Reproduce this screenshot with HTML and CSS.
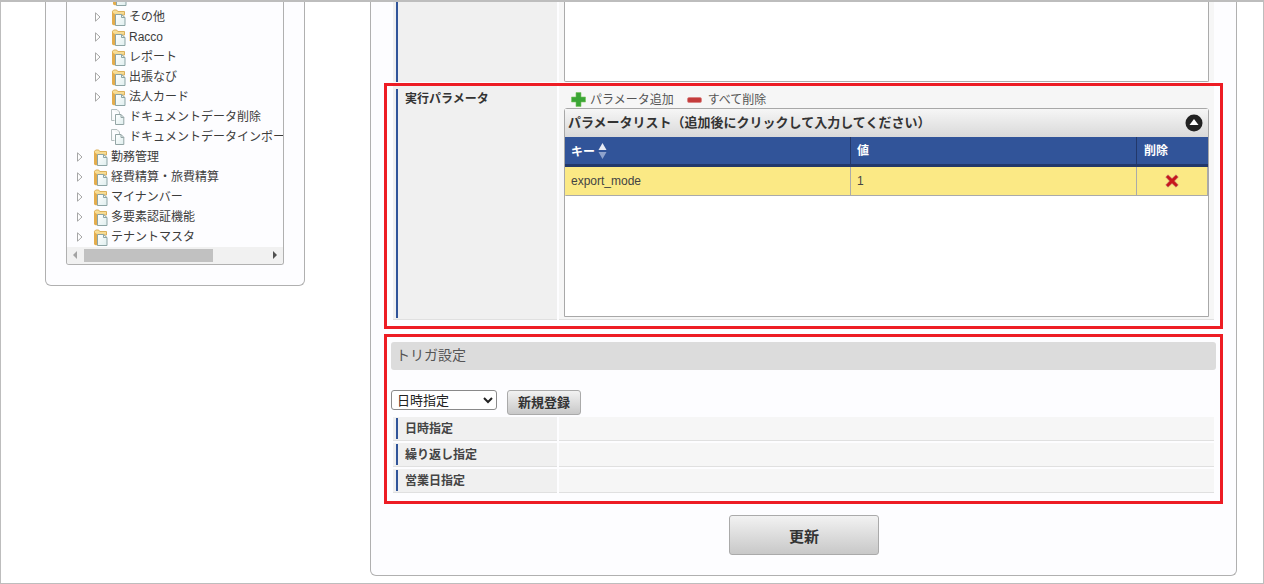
FILE: index.html
```html
<!DOCTYPE html>
<html lang="ja">
<head>
<meta charset="utf-8">
<title>ジョブ設定</title>
<link rel="stylesheet" href="styles.css">
</head>
<body>
<svg class="defs" width="0" height="0" aria-hidden="true">
  <defs>
    <linearGradient id="fold" x1="0" y1="0" x2="0" y2="1"><stop offset="0" stop-color="#fae3a0"/><stop offset="1" stop-color="#e8bc62"/></linearGradient>
    <linearGradient id="page" x1="0" y1="0" x2="1" y2="1"><stop offset="0" stop-color="#ffffff"/><stop offset="1" stop-color="#dfeeee"/></linearGradient>
    <symbol id="doc" viewBox="0 0 15 18">
      <path d="M1.500 1.500h5.500l2.500 2.500v2.500M1.500 1.500v11h3" fill="#f6f8f8" stroke="#b4bebe"/>
      <path d="M5.500 6.500h5.500l2.800 2.800v7.200h-8.300z" fill="url(#page)" stroke="#93a5a5"/>
      <path d="M11 6.500v3h2.800" fill="none" stroke="#93a5a5"/>
    </symbol>
    <symbol id="folder" viewBox="0 0 15 17">
      <path d="M1.500 15V2.200L2.700 1h3l1 1.500h6.800V6H5v9.500H2z" fill="url(#fold)" stroke="#dcb05a"/>
      <path d="M1 3v12l1.500 1.200H5V6z" fill="#e3ad4e"/>
      <path d="M4.500 5.500h6l3.500 3v8h-9.500z" fill="url(#page)" stroke="#8da5a5"/>
      <path d="M10.500 5.500v3H14" fill="none" stroke="#8da5a5"/>
    </symbol>
    <symbol id="arrow" viewBox="0 0 6 10">
      <path d="M0.500 0.800l4.500 4.200l-4.500 4.200z" fill="#fff" stroke="#a6a6a6"/>
    </symbol>
  </defs>
</svg>
<div class="frame">
  <aside class="side">
    <div class="side-card">
      <div class="tree">
        <ul class="tree-list">
          <li class="node lv2 clip"><svg class="ic"><use href="#folder"/></svg></li>
          <li class="node lv2"><svg class="ar"><use href="#arrow"/></svg><svg class="ic"><use href="#folder"/></svg><span>その他</span></li>
          <li class="node lv2"><svg class="ar"><use href="#arrow"/></svg><svg class="ic"><use href="#folder"/></svg><span>Racco</span></li>
          <li class="node lv2"><svg class="ar"><use href="#arrow"/></svg><svg class="ic"><use href="#folder"/></svg><span>レポート</span></li>
          <li class="node lv2"><svg class="ar"><use href="#arrow"/></svg><svg class="ic"><use href="#folder"/></svg><span>出張なび</span></li>
          <li class="node lv2"><svg class="ar"><use href="#arrow"/></svg><svg class="ic"><use href="#folder"/></svg><span>法人カード</span></li>
          <li class="node lv2 leaf"><svg class="ic tall"><use href="#doc"/></svg><span>ドキュメントデータ削除</span></li>
          <li class="node lv2 leaf"><svg class="ic tall"><use href="#doc"/></svg><span>ドキュメントデータインポート</span></li>
          <li class="node"><svg class="ar"><use href="#arrow"/></svg><svg class="ic"><use href="#folder"/></svg><span>勤務管理</span></li>
          <li class="node"><svg class="ar"><use href="#arrow"/></svg><svg class="ic"><use href="#folder"/></svg><span>経費精算・旅費精算</span></li>
          <li class="node"><svg class="ar"><use href="#arrow"/></svg><svg class="ic"><use href="#folder"/></svg><span>マイナンバー</span></li>
          <li class="node"><svg class="ar"><use href="#arrow"/></svg><svg class="ic"><use href="#folder"/></svg><span>多要素認証機能</span></li>
          <li class="node"><svg class="ar"><use href="#arrow"/></svg><svg class="ic"><use href="#folder"/></svg><span>テナントマスタ</span></li>
        </ul>
        <div class="hscroll">
          <span class="sb-left"></span>
          <div class="sb-track"><div class="sb-thumb"></div></div>
          <span class="sb-right"></span>
        </div>
      </div>
    </div>
  </aside>

  <main class="main-card">
    <div class="form-row first">
      <div class="label"></div>
      <div class="value"><div class="textarea"></div></div>
    </div>
    <div class="form-row params">
      <div class="label"><span class="label-bar">実行パラメータ</span></div>
      <div class="value">
        <div class="actions">
          <svg class="act-ic" viewBox="0 0 15 15"><path d="M5 .5h5v4.500h4.500v5h-4.500v4.500h-5v-4.500h-4.500v-5h4.500z" fill="#3aa535" stroke="#7ac25e" stroke-width=".6"/></svg>
          <span class="act-text">パラメータ追加</span>
          <svg class="act-ic minus" viewBox="0 0 15 6"><rect x=".5" y=".5" width="14" height="5" rx="1.500" fill="#c43c3c" stroke="#d87878" stroke-width=".6"/></svg>
          <span class="act-text">すべて削除</span>
        </div>
        <div class="panel">
          <div class="panel-head">
            <span>パラメータリスト（追加後にクリックして入力してください）</span>
            <svg class="collapse" viewBox="0 0 18 18"><circle cx="9" cy="9" r="8.500" fill="#222"/><path d="M9 5l4.500 6h-9z" fill="#fff"/></svg>
          </div>
          <table class="grid">
            <thead>
              <tr>
                <th class="c1">キー<svg class="sort" viewBox="0 0 9 16"><path d="M4.500 0l4 7h-8z" fill="#e8ecf5"/><path d="M4.500 16l4-7h-8z" fill="#8fa3cc"/></svg></th>
                <th class="c2">値</th>
                <th class="c3">削除</th>
              </tr>
            </thead>
            <tbody>
              <tr>
                <td class="c1">export_mode</td>
                <td class="c2 num">1</td>
                <td class="c3 del"><svg class="x" viewBox="0 0 14 14"><path d="M3 .8L7 4.500 11 .8l2.300 2.300L9.500 7l3.800 3.900-2.300 2.300L7 9.500l-4 3.700L.7 10.900 4.500 7 .7 3.100z" fill="#c8171b" stroke="#b98a8a" stroke-width=".5"/></svg></td>
              </tr>
            </tbody>
          </table>
        </div>
      </div>
    </div>

    <section class="trigger">
      <h2 class="trigger-head">トリガ設定</h2>
      <div class="trigger-controls">
        <select class="kind"><option>日時指定</option></select>
        <button class="btn small" type="button">新規登録</button>
      </div>
      <div class="form-row mini"><div class="label"><span class="label-bar">日時指定</span></div><div class="value"></div></div>
      <div class="form-row mini"><div class="label"><span class="label-bar">繰り返し指定</span></div><div class="value"></div></div>
      <div class="form-row mini"><div class="label"><span class="label-bar">営業日指定</span></div><div class="value"></div></div>
    </section>

    <div class="submit"><button class="btn big" type="button">更新</button></div>

    <div class="mark mark-a"></div>
    <div class="mark mark-b"></div>
  </main>
</div>
</body>
</html>
```

FILE: styles.css
```css
* { box-sizing: border-box; }
html, body { margin: 0; padding: 0; }
body {
  width: 1264px;
  height: 584px;
  overflow: hidden;
  background: #fff;
  color: #333;
  font: 12px/1.2 "Liberation Sans", "Noto Sans CJK JP", sans-serif;
}
.defs { position: absolute; }
.frame {
  display: flex;
  align-items: flex-start;
  width: 1264px;
  height: 584px;
  overflow: hidden;
  border: 1px solid #bdbdbd;
  border-top-width: 2px;
  border-bottom-width: 1px;
  padding-left: 44px;
  background: #fff;
}

/* left tree */
.side { width: 260px; flex: none; margin-right: 65px; }
.side-card {
  height: 284px;
  padding: 0 20px 20px;
  background: #fdfdff;
  border: 1px solid #b0b0b0;
  border-top: 0;
  border-radius: 0 0 6px 6px;
}
.tree {
  height: 263px;
  display: flex;
  flex-direction: column;
  overflow: hidden;
  border: 1px solid #b0b0b0;
  border-top: 0;
  border-radius: 0 0 3px 3px;
  background: #fdfdff;
}
.tree-list {
  list-style: none;
  margin: -15px 0 0;
  padding: 0;
  flex: none;
  height: 260px;
  overflow: hidden;
}
.node {
  display: flex;
  align-items: center;
  height: 20px;
  padding-left: 10px;
  white-space: nowrap;
  color: #3c3c3c;
}
.node.lv2 { padding-left: 28px; }
.node.leaf { padding-left: 43px; }
.node.clip { padding-left: 45px; }
.ar { width: 6px; height: 10px; flex: none; margin-right: 10px; }
.ic { width: 15px; height: 17px; flex: none; margin-right: 3px; }
.ic.tall { height: 18px; margin-right: 4px; }
.node span { line-height: 20px; }
.hscroll {
  height: 17px;
  flex: none;
  display: flex;
  align-items: center;
  background: #f1f1f1;
}
.sb-left, .sb-right { width: 17px; height: 17px; flex: none; position: relative; }
.sb-left::before, .sb-right::before {
  content: "";
  position: absolute;
  top: 4px;
  width: 0;
  height: 0;
  border: 4px solid transparent;
}
.sb-left::before { left: 2px; border-right: 4px solid #a3a3a3; }
.sb-right::before { left: 7px; border-left: 4px solid #505050; }
.sb-track { flex: 1; height: 13px; }
.sb-thumb { width: 129px; height: 13px; background: #c1c1c1; }

/* main */
.main-card {
  position: relative;
  width: 867px;
  height: 574px;
  flex: none;
  padding: 0 20px 0 20px;
  background: #fdfdff;
  border: 1px solid #b0b0b0;
  border-top: 0;
  border-radius: 0 0 6px 6px;
}
.form-row { display: flex; gap: 2px; }
.form-row .label {
  width: 164px;
  flex: none;
  margin-left: 2px;
  background: #f0f0f0;
  border-bottom: 1px solid #e0e0e0;
  padding: 4px 0 1px 3px;
}
.form-row .value {
  flex: 1;
  margin-right: 2px;
  background: #f6f6f6;
  border-bottom: 1px solid #e0e0e0;
  padding: 0 5px;
}
.form-row.first { height: 80px; background: #fdfdff; }
.form-row.first .label { border-bottom: 0; border-left: 0; position: relative; padding: 0; }
.form-row.first .label::before {
  content: "";
  position: absolute;
  left: 3px;
  top: 0;
  bottom: 0;
  width: 2px;
  background: #315499;
}
.form-row.first .value { border-bottom: 0; }
.textarea {
  height: 80px;
  background: #fff;
  border: 1px solid #ababab;
  border-top: 0;
  border-radius: 0 0 2px 2px;
}
.label-bar {
  display: block;
  height: 100%;
  border-left: 2px solid #315499;
  padding-left: 7px;
  color: #333;
  font-weight: bold;
  line-height: 20px;
}
.params { margin-top: 3px; height: 235px; }
.params .value { padding-top: 6px; }
.actions {
  display: flex;
  align-items: center;
  height: 17px;
  padding-left: 7px;
  color: #555;
}
.act-ic { width: 15px; height: 15px; flex: none; margin-right: 4px; }
.act-ic.minus { height: 6px; margin-right: 6px; }
.act-text { margin-right: 13px; padding-top: 2px; }
.panel {
  height: 209px;
  background: #fff;
  border: 1px solid #a8a8a8;
  border-radius: 3px 3px 0 0;
}
.panel-head {
  display: flex;
  align-items: center;
  justify-content: space-between;
  height: 28px;
  padding: 0 5px 0 3px;
  background: linear-gradient(#f6f6f6, #d9d9d9);
  color: #333;
  font-size: 13px;
  font-weight: bold;
}
.collapse { width: 18px; height: 18px; flex: none; }
.grid {
  width: 643px;
  table-layout: fixed;
  border-collapse: separate;
  border-spacing: 0;
}
.grid th {
  height: 30px;
  padding: 2px 6px 0;
  background: #315499;
  color: #fff;
  font-size: 12px;
  font-weight: bold;
  text-align: left;
  border-bottom: 3px solid #22386a;
  border-right: 1px solid #22386a;
}
.grid th:last-child { border-right: 0; padding-left: 7px; }
.grid td {
  height: 29px;
  padding: 1px 5px 0 6px;
  background: #fbe985;
  border-bottom: 1px solid #aaa;
  border-right: 1px solid #aaa;
  color: #444;
}
.grid td:first-child { border-left: 1px solid #fbe985; padding-left: 5px; }
.grid td:last-child { border-right: 1px solid #aaa; }
.c1 { width: 286px; }
.c2 { width: 286px; }
.c3 { width: 71px; }
.sort { width: 9px; height: 16px; margin-left: 3px; vertical-align: -3px; }
.num { color: #1a7a8a; }
.grid td.del { text-align: center; padding: 0 1px 0 0; }
.x { width: 14px; height: 14px; vertical-align: middle; }

/* trigger */
.trigger { margin-top: 22px; }
.trigger-head {
  margin: 0;
  height: 28px;
  padding-left: 5px;
  border-radius: 3px;
  background: #dcdcdc;
  color: #555;
  font-size: 14px;
  font-weight: normal;
  line-height: 27px;
}
.trigger-controls {
  display: flex;
  align-items: flex-start;
  gap: 10px;
  height: 45px;
  padding-top: 20px;
}
.kind {
  width: 106px;
  height: 20px;
  padding: 0 1px;
  background: #fff;
  color: #222;
  border: 1px solid #8a8a8a;
  border-radius: 3px;
  font: 13px "Liberation Sans", "Noto Sans CJK JP", sans-serif;
}
.btn {
  background: linear-gradient(#f2f2f2, #c8c8c8);
  border: 1px solid #aaa;
  border-radius: 3px;
  color: #333;
  font-family: "Liberation Sans", "Noto Sans CJK JP", sans-serif;
  font-weight: bold;
  padding: 0;
}
.btn.small { width: 74px; height: 25px; font-size: 13px; padding-bottom: 2px; }
.btn.big { width: 150px; height: 40px; font-size: 15px; }
.form-row.mini { height: 24px; margin-top: 2px; }
.form-row.mini .label { padding: 1px 0 1px 3px; }
.form-row.mini .label-bar { line-height: 23px; color: #444; }
.submit { display: flex; justify-content: center; margin-top: 22px; padding-left: 1px; }

/* annotation frames */
.mark { position: absolute; left: 13px; width: 839px; border: 3px solid #ed1c24; pointer-events: none; }
.mark-a { top: 81px; height: 246px; }
.mark-b { top: 332px; height: 170px; }
```
